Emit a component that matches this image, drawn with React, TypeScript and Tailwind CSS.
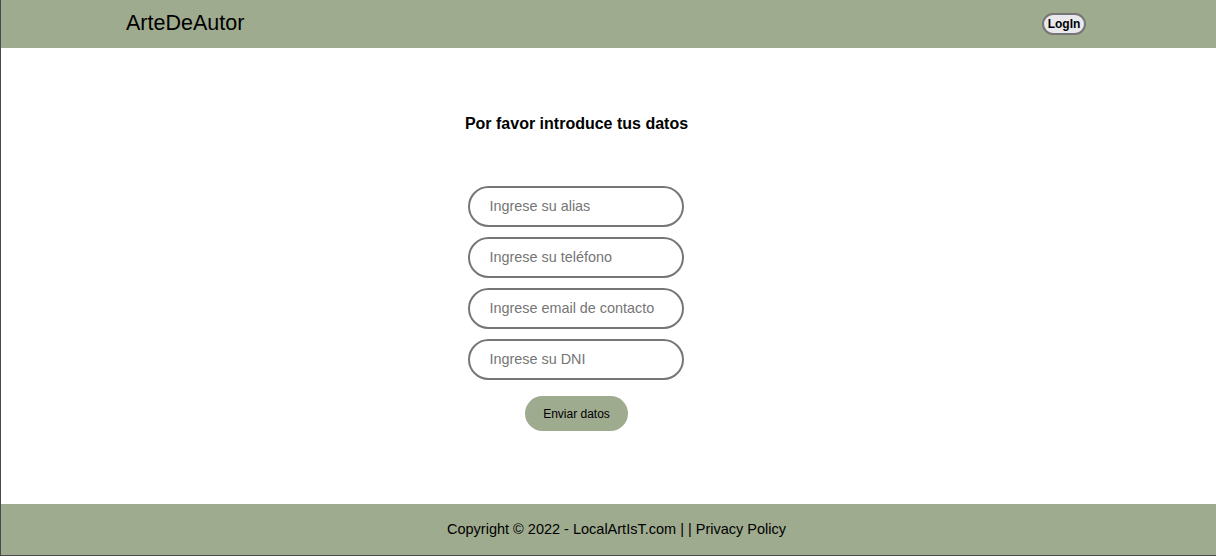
import React from "react";

export default function App() {
  const font = { fontFamily: '"Liberation Sans", Arial, sans-serif' };
  return (
    <div
      className="flex min-h-[556px] w-[1216px] flex-col border-l border-b border-[#4a4a4a] bg-white text-black"
      style={font}
    >
      <header className="flex h-[48px] items-center justify-between bg-[#9fab8f] pl-[125px] pr-[130px]">
        <span className="text-[21.5px] leading-none">ArteDeAutor</span>
        <button className="flex h-[22px] w-[44px] items-center justify-center rounded-full border-2 border-[#767676] bg-[#e9e9ed] text-[12px] font-bold leading-none">
          LogIn
        </button>
      </header>
      <main className="flex flex-1 justify-center pr-[64px]">
        <div className="flex flex-col items-center">
          <h1 className="mt-[67px] text-[16px] font-bold leading-[18px]">
            Por favor introduce tus datos
          </h1>
          <form className="mt-[53px] flex flex-col items-center gap-[10px]">
            {[
              "Ingrese su alias",
              "Ingrese su teléfono",
              "Ingrese email de contacto",
              "Ingrese su DNI",
            ].map((p) => (
              <input
                key={p}
                placeholder={p}
                className="box-border h-[41px] w-[216px] rounded-full border-2 border-[#767676] bg-white pb-[2px] pl-[19px] text-[14.4px] outline-none placeholder:text-[#757575]"
                style={font}
              />
            ))}
            <button
              type="button"
              className="mt-[6px] h-[35px] w-[103px] rounded-full bg-[#9fab8f] text-[12px]"
            >
              Enviar datos
            </button>
          </form>
        </div>
      </main>
      <footer className="flex h-[51px] items-center justify-center bg-[#9fab8f] pl-[16px] text-[14.5px]">
        Copyright © 2022 - LocalArtIsT.com | | Privacy Policy
      </footer>
    </div>
  );
}
